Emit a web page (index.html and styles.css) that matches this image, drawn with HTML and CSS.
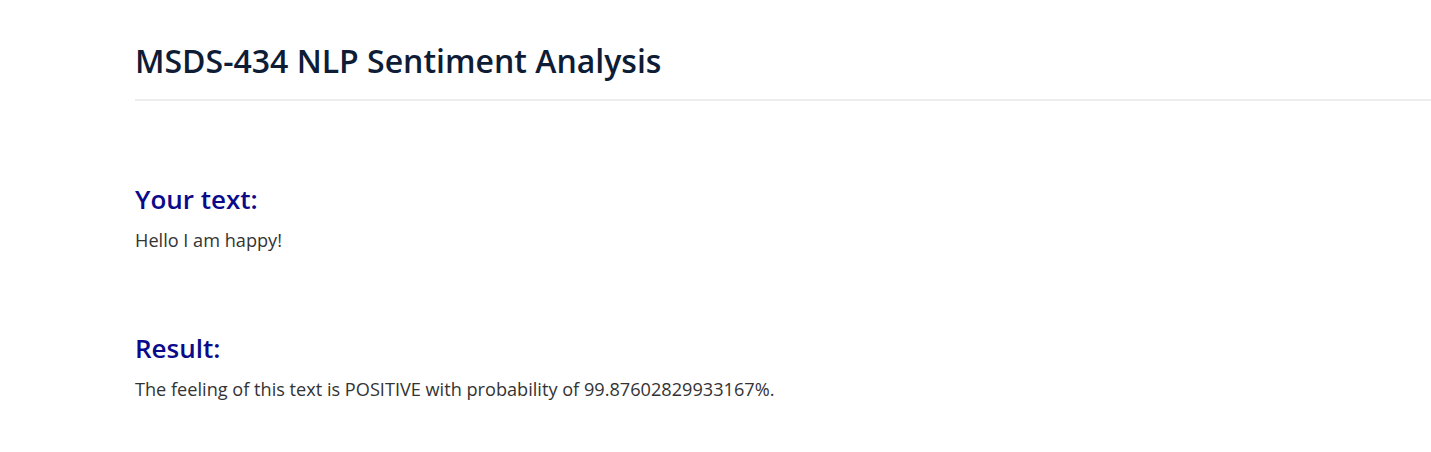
FILE: index.html
```html
<!DOCTYPE html>
<html lang="en">
<head>
<meta charset="utf-8">
<title>MSDS-434 NLP Sentiment Analysis</title>
<link rel="stylesheet" href="styles.css">
</head>
<body>
<div class="page">
  <header class="header">
    <h1 class="title">MSDS-434 NLP Sentiment Analysis</h1>
  </header>
  <section class="block block-input">
    <h2 class="label">Your text:</h2>
    <p class="content">Hello I am happy!</p>
  </section>
  <section class="block block-result">
    <h2 class="label">Result:</h2>
    <p class="content">The feeling of this text is POSITIVE with probability of 99.87602829933167%.</p>
  </section>
</div>
</body>
</html>
```

FILE: styles.css
```css
html, body {
  margin: 0;
  padding: 0;
  background: #ffffff;
}
body {
  font-family: "Segoe UI", "Open Sans", "Noto Sans", sans-serif;
}
.page {
  padding-left: 135px;
}
.header {
  padding-top: 40px;
  padding-bottom: 17px;
  border-bottom: 2px solid #ececec;
}
.title {
  margin: 0;
  font-size: 32px;
  font-weight: 600;
  line-height: 42px;
  color: #0e1c36;
}
.block {
  display: flex;
  flex-direction: column;
}
.block-input {
  padding-top: 81px;
}
.block-result {
  padding-top: 78px;
}
.label {
  margin: 0;
  font-size: 26px;
  font-weight: 600;
  line-height: 34px;
  color: #0a0a8a;
}
.content {
  margin: 11px 0 0;
  font-size: 18.15px;
  line-height: 26px;
  color: #333333;
}
```
